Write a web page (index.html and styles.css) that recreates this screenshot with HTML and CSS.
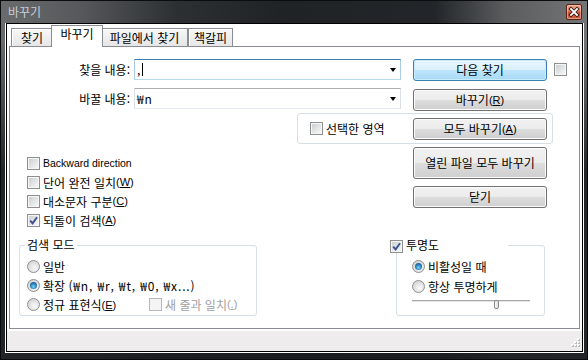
FILE: index.html
```html
<!DOCTYPE html>
<html lang="ko">
<head>
  <meta charset="UTF-8" />
  <title>바꾸기</title>
  <link rel="stylesheet" href="styles.css">
</head>
<body>
  <div class="window">
    <!-- 타이틀 바 -->
    <div class="titlebar">
      <span class="title">바꾸기</span>
      <span class="close-btn">
        <svg width="16" height="16" viewBox="0 0 16 16">
          <path d="M5 5 L11 11 M11 5 L5 11" stroke="#3a1a12" stroke-width="3.6" stroke-linecap="square"/>
          <path d="M5 5 L11 11 M11 5 L5 11" stroke="#ffffff" stroke-width="1.8" stroke-linecap="square"/>
        </svg>
      </span>
    </div>

    <div class="frame">
      <div class="frame-inner">
        <div class="client">
          <!-- 탭 -->
          <div class="tabs">
            <div class="tab tab-find">찾기</div>
            <div class="tab tab-replace active">바꾸기</div>
            <div class="tab tab-files">파일에서 찾기</div>
            <div class="tab tab-marks">책갈피</div>
          </div>

          <div class="panel">
            <!-- 찾을 내용 -->
            <div class="row row-find">
              <label class="field-label">찾을 내용:</label>
              <div class="combo focused">
                <span class="combo-text">,<span class="caret"></span></span>
                <span class="arrow"></span>
              </div>
              <button class="btn default">다음 찾기</button>
              <span class="chk side-chk"></span>
            </div>

            <!-- 바꿀 내용 -->
            <div class="row row-replace">
              <label class="field-label">바꿀 내용:</label>
              <div class="combo">
                <span class="combo-text wide">₩n</span>
                <span class="arrow"></span>
              </div>
              <button class="btn">바꾸기<span class="mn">(<u>R</u>)</span></button>
            </div>

            <!-- 선택한 영역 -->
            <div class="row row-selection">
              <div class="sel-group">
                <span class="check-item"><span class="chk"></span>선택한 영역</span>
                <button class="btn">모두 바꾸기<span class="mn">(<u>A</u>)</span></button>
              </div>
            </div>

            <div class="middle">
              <div class="options">
                <div class="check-item"><span class="chk"></span><span class="latin">Backward direction</span></div>
                <div class="check-item"><span class="chk"></span>단어 완전 일치<span class="mn">(<u>W</u>)</span></div>
                <div class="check-item"><span class="chk"></span>대소문자 구분<span class="mn">(<u>C</u>)</span></div>
                <div class="check-item">
                  <span class="chk">
                    <svg width="9" height="9" viewBox="0 0 9 9"><path d="M1.2 4.6 L3.6 7.4 L8 1.2" fill="none" stroke="#3f5290" stroke-width="1.9"/></svg>
                  </span>되돌이 검색<span class="mn">(<u>A</u>)</span>
                </div>
              </div>
              <div class="actions">
                <button class="btn tall">열린 파일 모두 바꾸기</button>
                <button class="btn close">닫기</button>
              </div>
            </div>

            <div class="bottom">
              <!-- 검색 모드 -->
              <fieldset class="group mode">
                <legend>검색 모드</legend>
                <div class="radio-item"><span class="radio"></span>일반</div>
                <div class="radio-item"><span class="radio on"><span class="dot"></span></span>확장&nbsp;<span class="wide">(₩n, ₩r, ₩t, ₩0, ₩x...)</span></div>
                <div class="radio-item">
                  <span class="regex"><span class="radio"></span>정규 표현식<span class="mn">(<u>E</u>)</span></span>
                  <span class="check-item disabled"><span class="chk"></span>새 줄과 일치<span class="mn">(<u>.</u>)</span></span>
                </div>
              </fieldset>

              <!-- 투명도 -->
              <div class="group transp">
                <div class="transp-head">
                  <span class="chk">
                    <svg width="9" height="9" viewBox="0 0 9 9"><path d="M1.2 4.6 L3.6 7.4 L8 1.2" fill="none" stroke="#3f5290" stroke-width="1.9"/></svg>
                  </span>투명도
                </div>
                <div class="radio-item"><span class="radio on"><span class="dot"></span></span>비활성일 때</div>
                <div class="radio-item"><span class="radio"></span>항상 투명하게</div>
                <div class="slider">
                  <span class="track"></span>
                  <span class="thumb"></span>
                </div>
              </div>
            </div>
          </div>

          <!-- 상태 표시줄 -->
          <div class="statusbar">
            <svg class="grip" width="12" height="12" viewBox="0 0 12 12">
              <rect x="9" y="1" width="2" height="2" fill="#b9b7b6"/>
              <rect x="6" y="4" width="2" height="2" fill="#b9b7b6"/>
              <rect x="9" y="4" width="2" height="2" fill="#b9b7b6"/>
              <rect x="3" y="7" width="2" height="2" fill="#b9b7b6"/>
              <rect x="6" y="7" width="2" height="2" fill="#b9b7b6"/>
              <rect x="9" y="7" width="2" height="2" fill="#b9b7b6"/>
              <rect x="8" y="0" width="2" height="2" fill="#fff"/>
              <rect x="5" y="3" width="2" height="2" fill="#fff"/>
              <rect x="8" y="3" width="2" height="2" fill="#fff"/>
              <rect x="2" y="6" width="2" height="2" fill="#fff"/>
              <rect x="5" y="6" width="2" height="2" fill="#fff"/>
              <rect x="8" y="6" width="2" height="2" fill="#fff"/>
            </svg>
          </div>
        </div>
      </div>
    </div>
  </div>
</body>
</html>
```

FILE: styles.css
```css
/* 기본 */
* {
  box-sizing: border-box;
}
html, body {
  margin: 0;
  padding: 0;
}
body {
  width: 588px;
  height: 360px;
  overflow: hidden;
  font-family: "Noto Sans CJK KR", "Noto Sans", sans-serif;
  font-size: 12px;
  color: #000;
  background: #1d2124;
}

/* 창 테두리 */
.window {
  width: 588px;
  height: 360px;
  display: flex;
  flex-direction: column;
  border: 1px solid #0b0c0d;
  background:
    linear-gradient(to bottom, rgba(26, 29, 32, 0) 40px, rgba(26, 29, 32, 0.9) 170px),
    linear-gradient(to right, #6a6b6c 0%, #55575a 14%, #2c3033 30%, #1f2326 48%, #22262a 74%, #5a5c5e 86%, #747576 100%);
}

/* 타이틀 바 */
.titlebar {
  height: 22px;
  flex-shrink: 0;
  display: flex;
  align-items: center;
  padding: 0 5px 0 7px;
}
.title {
  color: #c6cfd7;
  line-height: 14px;
}
.close-btn {
  margin-left: auto;
  width: 16px;
  height: 16px;
  border: 1px solid #5c2214;
  border-radius: 2px;
  background: linear-gradient(to bottom, #eca58f 0%, #e0795d 45%, #c9482a 55%, #d4654a 100%);
  box-shadow: inset 0 0 0 1px rgba(255, 210, 190, 0.5);
  display: flex;
  align-items: center;
  justify-content: center;
}
.close-btn svg {
  margin: -1px;
}

/* 클라이언트 영역 */
.frame {
  flex: 1;
  padding: 0 3px 6px 4px;
}
.frame-inner {
  height: 100%;
  border: 1px solid #fff;
  border-top: none;
}
.client {
  height: 100%;
  border: 1px solid #000;
  background: #fff;
  display: flex;
  flex-direction: column;
}

/* 탭 */
.tabs {
  height: 22px;
  flex-shrink: 0;
  display: flex;
  align-items: flex-end;
  padding-left: 4px;
}
.tab {
  height: 18px;
  border: 1px solid #898c95;
  border-bottom: none;
  background: linear-gradient(to bottom, #f7f7f7, #e6e6e6);
  box-shadow: inset 1px 1px 0 #fff;
  text-align: center;
  line-height: 17px;
}
.tab-find { width: 42px; }
.tab-files { width: 87px; }
.tab-marks { width: 45px; }
.tab.active {
  width: 52px;
  height: 22px;
  margin: 0 -2px -1px;
  background: #fff;
  box-shadow: none;
  position: relative;
  z-index: 1;
  line-height: 16px;
}

/* 탭 패널 */
.panel {
  height: 283px;
  flex-shrink: 0;
  margin: 0 2px;
  border: 1px solid #898c95;
}

.row {
  display: flex;
  align-items: flex-start;
}
.row-find {
  margin-top: 12px;
}
.row-replace {
  margin-top: 7px;
}
.row-replace .btn {
  margin-top: 1px;
}
.row-selection {
  margin-top: 2px;
}

.field-label {
  width: 120px;
  margin-right: 4px;
  text-align: right;
  line-height: 21px;
}

/* 콤보 박스 */
.combo {
  width: 267px;
  height: 21px;
  display: flex;
  align-items: center;
  padding-left: 2px;
  border: 1px solid #dbdfe6;
  border-top-color: #abadb3;
  border-bottom-color: #e3e9ef;
}
.combo.focused {
  border-color: #a9cbe6;
  border-top-color: #3d7bad;
  border-bottom-color: #b7d9ed;
}
.combo-text {
  display: flex;
  align-items: center;
  line-height: 15px;
}
.caret {
  width: 1px;
  height: 13px;
  margin-left: 2px;
  background: #000;
}
.arrow {
  margin-left: auto;
  margin-right: 4px;
  width: 0;
  height: 0;
  border-left: 3.5px solid transparent;
  border-right: 3.5px solid transparent;
  border-top: 4px solid #000;
}

/* 라틴 문자 폭 보정 */
.wide {
  letter-spacing: 0.85px;
}

/* 버튼 */
.btn {
  width: 134px;
  height: 22px;
  padding: 0;
  margin: 0;
  font-family: inherit;
  font-size: 12px;
  color: #000;
  border: 1px solid #707070;
  border-radius: 3px;
  background: linear-gradient(to bottom, #f2f2f2 0%, #ebebeb 50%, #dddddd 50%, #cfcfcf 100%);
  box-shadow: inset 0 0 0 1px #fcfcfc;
  display: flex;
  align-items: center;
  justify-content: center;
  line-height: 14px;
}
.btn.default {
  border-color: #3c7fb1;
  background: linear-gradient(to bottom, #eaf6fd 0%, #d9f0fc 50%, #bee6fd 50%, #a7d9f5 100%);
  box-shadow: inset 0 0 0 1px #c9ecfd;
}
.row-find .btn {
  margin-left: 12px;
}
.row-replace .btn {
  margin-left: 12px;
}
.btn.tall {
  height: 32px;
}
.btn.close {
  margin-top: 7px;
}

/* 단축키 표시 */
.mn {
  font-family: "Liberation Sans", sans-serif;
  font-size: 11px;
}
.latin {
  font-family: "Liberation Sans", sans-serif;
  font-size: 10.5px;
}

/* 체크 박스 */
.chk {
  width: 13px;
  height: 13px;
  flex-shrink: 0;
  display: inline-flex;
  padding: 1px;
  border: 1px solid #8e8f8f;
  background: linear-gradient(135deg, #cdd0d4, #f6f6f6) content-box, #f6f6f6;
}
.chk svg {
  display: block;
}
.side-chk {
  margin-left: 7px;
  margin-top: 4px;
}
.check-item {
  display: flex;
  align-items: center;
  line-height: 15px;
}
.check-item .chk {
  margin-right: 3px;
}
.check-item.disabled {
  color: #a0a0a0;
}
.check-item.disabled .chk {
  border-color: #b8b8b8;
  background: #f4f4f4;
}

/* 선택한 영역 그룹 */
.sel-group {
  width: 256px;
  height: 31px;
  margin-left: 287px;
  padding: 0 5px 0 12px;
  border: 1px solid #d5dfe5;
  border-radius: 3px;
  display: flex;
  align-items: center;
}
.sel-group .btn {
  margin-left: auto;
}

/* 옵션과 버튼 */
.middle {
  display: flex;
  margin-top: 3px;
}
.options {
  margin-left: 17px;
  padding-top: 7px;
}
.options .check-item {
  height: 19px;
}
.actions {
  margin-left: auto;
  margin-right: 32px;
  display: flex;
  flex-direction: column;
}

/* 그룹 박스 */
.bottom {
  display: flex;
  margin-top: 8px;
}
.group {
  margin: 0;
  border: 1px solid #d5dfe5;
  border-radius: 3px;
  min-width: 0;
}
.group legend {
  line-height: 14px;
}
.mode {
  width: 238px;
  margin-left: 9px;
  padding: 5px 0 1px 7px;
}
.mode legend {
  margin-left: -2px;
  padding: 0 2px;
}
.transp {
  width: 149px;
  margin-left: 139px;
  margin-top: 7px;
  padding: 0 0 0 15px;
}
.transp-head {
  width: 118px;
  height: 14px;
  margin: -8px 0 4px -22px;
  background: #fff;
  display: flex;
  align-items: center;
  line-height: 14px;
}
.transp-head .chk {
  margin-right: 3px;
  margin-top: 2px;
}

/* 라디오 버튼 */
.radio-item {
  height: 19px;
  display: flex;
  align-items: center;
}
.transp .radio-item {
  height: 20px;
}
.radio {
  width: 13px;
  height: 13px;
  flex-shrink: 0;
  margin-right: 3px;
  border-radius: 50%;
  border: 1px solid #8e8f8f;
  background: radial-gradient(circle at 60% 65%, #fbfbfb 0, #e4e4e4 45%, #c9c9c9 100%);
  display: inline-flex;
  align-items: center;
  justify-content: center;
}
.radio .dot {
  width: 7px;
  height: 7px;
  border-radius: 50%;
  background: radial-gradient(circle at 50% 65%, #7fd6f6 0, #2b86c4 45%, #0f3f69 100%);
}
.regex {
  width: 122px;
  display: flex;
  align-items: center;
}

/* 슬라이더 */
.slider {
  position: relative;
  width: 118px;
  height: 12px;
  margin-top: 1px;
}
.track {
  display: block;
  margin-top: 4px;
  height: 2px;
  border-top: 1px solid #a8a8a8;
  border-bottom: 1px solid #e6e6e6;
}
.thumb {
  position: absolute;
  left: 82px;
  top: 0;
  width: 5px;
  height: 9px;
  border: 1px solid #8c8c8c;
  border-radius: 2px;
  background: linear-gradient(to right, #fafafa, #dcdcdc);
}

/* 상태 표시줄 */
.statusbar {
  height: 20px;
  margin-top: 2px;
  flex-shrink: 0;
  background: #eeecec;
  display: flex;
  align-items: flex-end;
  justify-content: flex-end;
  padding: 0 1px 1px 0;
}
```
